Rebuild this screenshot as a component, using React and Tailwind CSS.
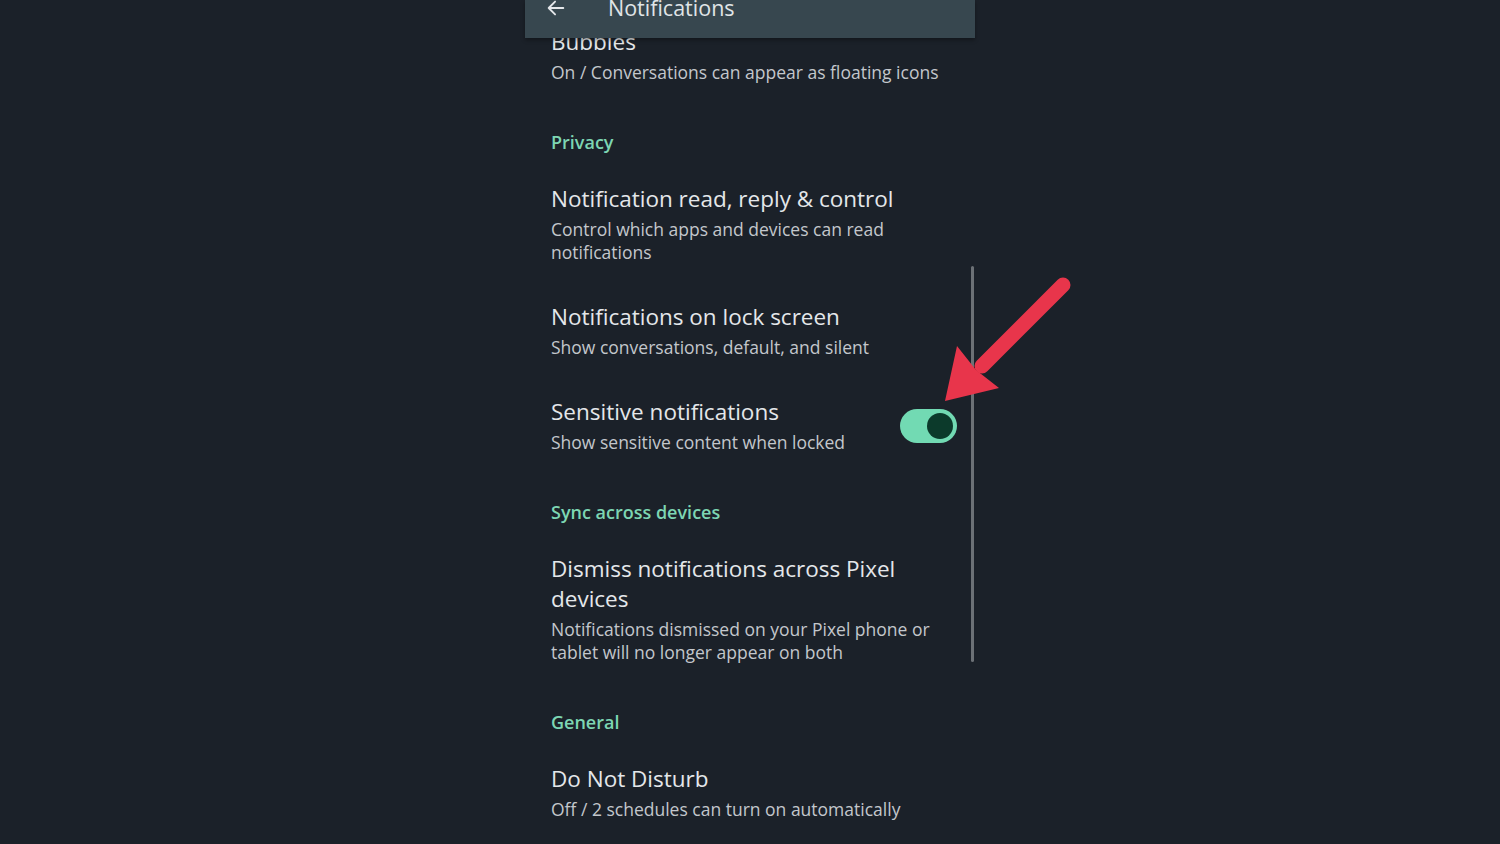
import React from 'react';

const items = [
  { type: 'item', title: 'Bubbles', sub: 'On / Conversations can appear as floating icons' },
  { type: 'section', label: 'Privacy' },
  { type: 'item', title: 'Notification read, reply & control', sub: 'Control which apps and devices can read notifications' },
  { type: 'item', title: 'Notifications on lock screen', sub: 'Show conversations, default, and silent' },
  { type: 'item', title: 'Sensitive notifications', sub: 'Show sensitive content when locked', toggle: true },
  { type: 'section', label: 'Sync across devices' },
  { type: 'item', title: 'Dismiss notifications across Pixel devices', sub: 'Notifications dismissed on your Pixel phone or tablet will no longer appear on both' },
  { type: 'section', label: 'General' },
  { type: 'item', title: 'Do Not Disturb', sub: 'Off / 2 schedules can turn on automatically' },
];

const Toggle = () => (
  <div className="ml-[20px] mr-[2px] flex items-center justify-end w-[57px] h-[34px] rounded-full bg-[#72dab3] px-[4px]">
    <div className="w-[26px] h-[26px] rounded-full bg-[#0c3a2b]" />
  </div>
);

const Row = ({ title, sub, toggle }) => (
  <div className="flex items-center py-[19px] pl-[26px] pr-[16px]">
    <div className="flex-1">
      <div className="text-[22.5px] leading-[30px] mb-[4px] text-[#e4e7ea]">{title}</div>
      <div className="text-[17.5px] leading-[23px] text-[#c3c7cc]">{sub}</div>
    </div>
    {toggle && <Toggle />}
  </div>
);

const SectionLabel = ({ label }) => (
  <div className="pl-[26px] pt-[28px] pb-[12px] text-[18px] leading-[22px] font-semibold text-[#7dd6b3]">
    {label}
  </div>
);

export default function App() {
  return (
    <div
      className="relative w-[1500px] h-[844px] overflow-hidden bg-[#1b2129] flex justify-center"
      style={{ fontFamily: '"Open Sans", Roboto, sans-serif' }}
    >
      <div className="relative w-[450px] h-full">
        <div className="pt-[8px]">
          {items.map((it, i) =>
            it.type === 'section' ? (
              <SectionLabel key={i} label={it.label} />
            ) : (
              <Row key={i} title={it.title} sub={it.sub} toggle={it.toggle} />
            )
          )}
        </div>

        {/* top app bar, scrolled over content */}
        <div className="absolute top-0 left-0 right-0 h-[38px] bg-[#37474f] shadow-[0_2px_4px_rgba(0,0,0,0.35)] overflow-hidden flex items-center pb-[22px] z-10">
          <svg className="ml-[20px] w-[22px] h-[22px]" viewBox="0 0 24 24" fill="none" stroke="#e4e7ea" strokeWidth="2" strokeLinecap="round" strokeLinejoin="round">
            <path d="M20 12H4M11 5l-7 7 7 7" />
          </svg>
          <span className="ml-[41px] text-[21.5px] leading-[30px] text-[#e0e5e7]">Notifications</span>
        </div>

        {/* scrollbar */}
        <div className="absolute left-[446px] top-[266px] w-[3px] h-[396px] rounded-full bg-[#6c7176]" />
      </div>

      {/* red annotation arrow */}
      <svg className="absolute left-0 top-0 pointer-events-none" width="1500" height="844" viewBox="0 0 1500 844">
        <line x1="1063" y1="285" x2="982" y2="366" stroke="#e8354b" strokeWidth="15" strokeLinecap="round" />
        <polygon points="945,401 957,346 976,370 999,388" fill="#e8354b" />
      </svg>
    </div>
  );
}
